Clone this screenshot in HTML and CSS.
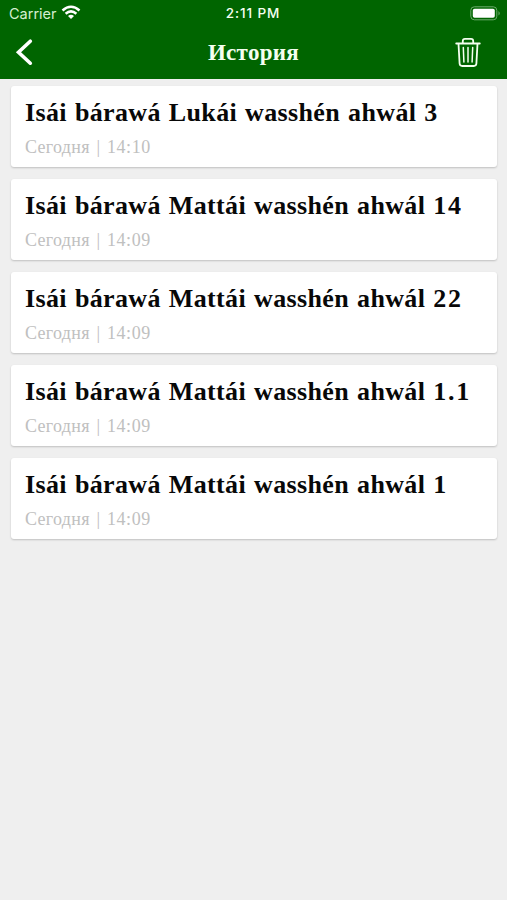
FILE: index.html
```html
<!DOCTYPE html>
<html lang="ru">
<head>
<meta charset="utf-8">
<title>История</title>
<link rel="stylesheet" href="styles.css">
</head>
<body>
<header class="header">
  <div class="status">
    <div class="carrier"><span>Carrier</span>
      <svg class="wifi" width="20" height="15" viewBox="0 0 20 15" fill="none" stroke="#fff" stroke-width="2.500"><path d="M1.500 5.500Q10-2 18.500 5.500M4.600 8.700Q10 4 15.400 8.700"/><path d="M7 11Q10 8.500 13 11L10 14Z" fill="#fff" stroke="none"/></svg>
    </div>
    <span class="clock">2:11 PM</span>
    <svg class="battery" width="31" height="15" viewBox="0 0 31 15"><rect x=".8" y=".8" width="26" height="13" rx="3.500" fill="none" stroke="#6bab6b"/><rect x="2.800" y="2.800" width="22" height="9" rx="1.800" fill="#fff"/><path d="M28.500 5Q31 7.300 28.500 9.600Z" fill="#6bab6b"/></svg>
  </div>
  <nav class="nav">
    <svg class="back" width="20" height="28" viewBox="0 0 20 28" fill="none" stroke="#fff" stroke-width="3.600" stroke-linecap="round"><path d="M16.300 3.200L4.500 14.200L16.300 25.200"/></svg>
    <h1 class="title">История</h1>
    <svg class="trash" width="26" height="31" viewBox="0 0 26 31" fill="none" stroke="#f4fff0" stroke-width="1.800" stroke-linecap="round" stroke-linejoin="round"><path d="M1.200 6.500H24.800M7.800 6.300V4Q7.800 1.800 10 1.800H16Q18.200 1.800 18.200 4V6.300M3.500 6.700L4.600 26.500Q4.800 29 7.200 29H18.800Q21.200 29 21.400 26.500L22.500 6.700"/><path d="M8.300 10.500L8.900 25M13 10.500V25M17.700 10.500L17.100 25" stroke-width="1.500"/></svg>
  </nav>
</header>
<main class="list">
  <article class="card"><h2 class="name">Isái bárawá Lukái wasshén ahwál <span class="num">3</span></h2><p class="time">Сегодня | <span class="clock-time">14:10</span></p></article>
  <article class="card"><h2 class="name">Isái bárawá Mattái wasshén ahwál <span class="num">14</span></h2><p class="time">Сегодня | <span class="clock-time">14:09</span></p></article>
  <article class="card"><h2 class="name">Isái bárawá Mattái wasshén ahwál <span class="num">22</span></h2><p class="time">Сегодня | <span class="clock-time">14:09</span></p></article>
  <article class="card"><h2 class="name">Isái bárawá Mattái wasshén ahwál <span class="num">1.1</span></h2><p class="time">Сегодня | <span class="clock-time">14:09</span></p></article>
  <article class="card"><h2 class="name">Isái bárawá Mattái wasshén ahwál <span class="num">1</span></h2><p class="time">Сегодня | <span class="clock-time">14:09</span></p></article>
</main>
</body>
</html>
```
FILE: styles.css
```css
* { box-sizing: border-box; }
body { margin: 0; min-height: 900px; background: #efefef; font-family: "Liberation Serif", serif; }
.header { height: 79px; background: #006500; color: #f4fff0; }
.status { display: grid; grid-template-columns: 1fr auto 1fr; align-items: center; height: 27px; padding: 0 7px 0 9px; font: 14.5px/27px Inter, sans-serif; }
.carrier { display: flex; align-items: center; gap: 4px; color: #d5efd0; }
.wifi { margin-top: -2px; }
.clock { margin-right: 3px; font-size: 13.5px; font-weight: 500; letter-spacing: .9px; }
.battery { justify-self: end; margin-right: -1px; }
.nav { display: grid; grid-template-columns: 1fr auto 1fr; align-items: center; height: 50px; padding: 0 26px 0 14px; }
.title { margin: 0 0 0 12px; padding-top: 1px; font-size: 23px; line-height: 49px; letter-spacing: .3px; }
.trash { justify-self: end; }
.list { display: flex; flex-direction: column; gap: 12px; padding: 7px 10px 0 11px; }
.card { height: 81px; padding: 12px 14px; background: #fff; border-radius: 3px; box-shadow: 0 1px 2px rgba(0,0,0,.2); white-space: nowrap; }
.name { margin: 0; font-size: 26px; line-height: 30px; letter-spacing: .35px; word-spacing: 1.2px; color: #080808; }
.num { letter-spacing: 1.7px; }
.time { margin: 9px 0 0; font-size: 18px; line-height: 20px; letter-spacing: .3px; word-spacing: 1.8px; color: #c0c0c0; }
.clock-time { letter-spacing: .6px; }
```
